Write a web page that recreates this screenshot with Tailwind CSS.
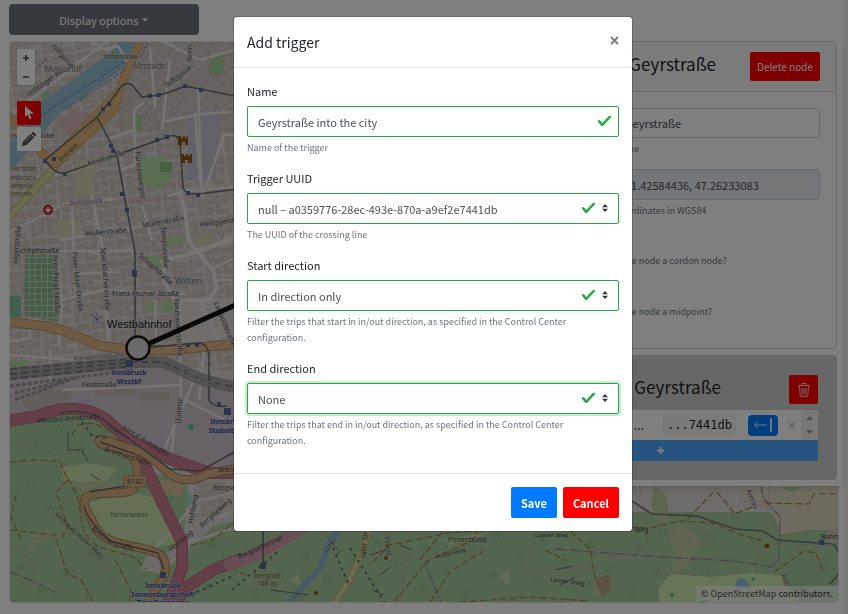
<!DOCTYPE html>
<html lang="en">
<head>
    <meta charset="UTF-8">
    <meta name="viewport" content="width=device-width, initial-scale=1.0">
    <title>Add trigger</title>
    <script src="https://cdn.jsdelivr.net/npm/@tailwindcss/browser@4"></script>
</head>
<body class="bg-white font-['Noto_Sans_CJK_SC',sans-serif] text-[11px] leading-5 text-[#212529] overflow-hidden">

    <!-- page -->
    <div class="relative min-h-screen px-[9px] pt-1 border-r-5 border-[#f4f4f4]">
        <button class="block w-[190px] h-[31px] rounded-sm bg-[#6c757d] text-white mb-[6px]">Display options <span class="inline-block align-middle mb-1 border-x-4 border-x-transparent border-t-4 border-t-white scale-75"></span></button>

        <div class="relative border border-[#dee2e6] rounded-sm overflow-hidden h-[562px] -mr-[5px]">
            <svg class="block w-full h-full" viewBox="10 42 828 560" preserveAspectRatio="xMinYMin slice" font-family="Noto Sans" font-size="7" fill="none">
                <defs>
                    <pattern id="houses" width="34" height="30" patternUnits="userSpaceOnUse" patternTransform="rotate(-7)">
                        <g fill="#d0c6bf" stroke="#c3b5ab" stroke-width=".6">
                            <path d="M2 2h8v6h-8zM11 2h5v8h-5zM18 3h10v5h-10zM29 2h4v9h-4zM2 11h5v12h-5zM9 13h8v5h-8zM19 11h4v12h-4zM25 13h7v6h-7zM9 21h7v7h-7zM2 25h5v4h-5zM19 25h12v4h-12z"/>
                        </g>
                    </pattern>
                    <pattern id="oldtown" width="27" height="25" patternUnits="userSpaceOnUse" patternTransform="rotate(-38)">
                        <path d="M1 1h7v10h-7zM9 2h9v6h-9zM20 1h6v11h-6zM9 10h9v5h-9zM2 14h5v9h-5zM10 17h11v6h-11zM22 14h4v9h-4z" fill="#cdc3bc" stroke="#bfb1a8" stroke-width=".6"/>
                    </pattern>
                    <pattern id="trees" width="47" height="41" patternUnits="userSpaceOnUse" patternTransform="rotate(6)">
                        <g stroke="#8fb583" stroke-width=".9">
                            <circle cx="8" cy="8" r="2"/><path d="M8 10v4"/><circle cx="12.500" cy="7" r="1.500"/><path d="M12.500 9v4"/>
                            <circle cx="31" cy="28" r="2"/><path d="M31 30v4"/><circle cx="35" cy="27" r="1.500"/><path d="M35 29v4"/>
                        </g>
                    </pattern>
                    <pattern id="orchard" width="6" height="6" patternUnits="userSpaceOnUse">
                        <path d="M0 0h5v5h-5z" fill="#8fb795"/>
                    </pattern>
                </defs>

                <!-- land use -->
                <path d="M0 30h840v580H0z" fill="#dcd8d6"/>
                <path d="M0 30h240v340H0z" fill="url(#houses)"/>
                <path d="M135 42h105v80l-60 5-45-20z" fill="#d5cfd3"/>
                <path d="M130 42h105v90h-120z" fill="url(#oldtown)"/>
                <path d="M190 110h30l-5 70h-30z" fill="#c6c3d0"/>
                <path d="M10 365l125-6 40 6 60 30v80l-60-15-70-45-95 8z" fill="#cfc5cd"/>
                <path d="M15 395l28-6 30 2-4 14-40 6zM95 385h40v9h-40zM140 392h30v9h-30z" fill="#c9bdb5"/>
                <path d="M25 255h32v67l-33-7z" fill="#bcdab0"/>
                <path d="M25 255h32v67l-33-7z" fill="url(#orchard)"/>
                <path d="M10 296h11v21H10z" fill="#7fbf9f"/>
                <path d="M140 158l25-2 7 22-12 12-22-8z" fill="#b5d9a4"/>
                <path d="M160 162h12v10h-12z" fill="#88c280"/>
                <path d="M210 58l15-3-2 19h-14zM132 116l10-2v16h-9zM72 87l8-4 8 15-7 5zM40 95l7-5 8 12-8 5z" fill="#a6cf9c"/>
                <path d="M75 160h20v35h-20zM55 222l25-2v18l-22 2zM195 235l15-3v12l-14 3z" fill="#d6d3b4"/>
                <path d="M165 240l20-4v7l-18 3zM145 302h9v10h-9zM162 302l11-3v14h-11zM147 257l13-2 3 14-12-5zM10 360h18l-3 8-15 3z" fill="#b2d4a0"/>
                <path d="M55 122l20-13 18 7-23 20z" fill="#d5b9b4"/>
                <path d="M180 298h60v45h-60z" fill="#e8e2e0" fill-opacity=".6"/>

                <!-- forest and meadows -->
                <path d="M10 424l55-12 34 3 35 30 14 25 35 12 12 10-12 50 10-10 45-20h600v100H10z" fill="#a9cb9f"/>
                <path d="M10 424l55-12 34 3 35 30 14 25 35 12 12 10-12 50 10-10 45-20h600v100H10z" fill="url(#trees)"/>
                <path d="M62 468l25-5 30 5-8 12-20 3-25-3zM85 503l50-10 22 5 20 45-30 7-38-10z" fill="#c9e0aa"/>
                <path d="M64 482l65-1 6 12-45 3zM30 550l18-12-8-6 6-4-14 8-10 20z" fill="#b9cb9f"/>
                <path d="M158 482l25-7v22l-20-4z" fill="#d8c29a"/>
                <path d="M187 485l18-5 28-3v45l-20 4-32 30-20 18-20-4 5-13 20-2 18-18z" fill="#dad6d2"/>
                <path d="M195 482h30v35h-30z" fill="url(#houses)"/>
                <path d="M733 482h107v48l-30 0-30 4-5-18-35-24z" fill="#ddd5c0"/>
                <path d="M780 487h22l-10 6z" fill="#a9cf9f"/>
                <path d="M659 602v-15l12-13 40 3 40-4 32 3 15 26z" fill="#cdebb0"/>
                <path d="M735 582l7-5 7 6v5h-13z" fill="#8fc1de"/>
                <path d="M668 532l15-7 18 14-15 30-14 6 3-20zM593 580l16-6 3 15-8 8-10-2zM655 486l12 10 2 26-12-2-6-15z" fill="#bfcba0"/>
                <path d="M594 579l16-5 1 16-9 7z" fill="#b8a685"/>
                <path d="M500 576l10-8-2 18zM440 540l50-8-14 8-25 4zM290 580l8-6 4 12z" fill="#c5d9ad"/>
                <path d="M828 530l12-2v10l-8 8-7-5z" fill="#cfc8c0"/>
                <g fill="#5fc49d"><circle cx="753" cy="579" r="2"/><circle cx="672" cy="595" r="2"/><circle cx="191" cy="427" r="3"/></g>
                <path d="M186 493l8-2-2 15-7 3z" fill="#a5d6c2"/>

                <!-- water -->
                <path d="M137 36L118 60 95 76 50 108 15 152 0 165" stroke="#92bfcb" stroke-width="20"/>
                <path d="M340 530l-12 14-8 25-15 15-18 20" stroke="#8fb3c8" stroke-width="6"/>

                <!-- side streets -->
                <g stroke="#ece9e7" stroke-width="2.500" stroke-linejoin="round">
                    <path d="M10 115l60-45 35-28M92 42l14 8 12-4 14 24M10 215l40-40M54 251h80M59 240l62-9 62-14M72 206l4 92M92 195l12 60 4 85M58 251l4 55-3 40M75 274l45-2M60 300l45-10 82 4M121 170l14-5-1-55 10-8M110 138l24-8M160 262l30-8 45-18M167 196l20-5 48-4"/>
                    <path d="M180 192l5 20 4 30 24 28 4 18-8 12h-35l-10-20v-20l30-7 22-8 25-8" stroke-width="4"/>
                    <path d="M198 88l4 110 22-63h10M155 300l1 40M180 298l1 100 48 24M142 205l10 35M214 268l20-10M214 280h20M200 300l22 48M10 355l80 6 40-2M62 390l120-5M175 420l-4 40M10 232l55-28 50-5M161 122l40-8 30-2M195 112l5 70M150 47l5 60M170 60l-8 70M160 40l40 20 40-12M30 318v20l-20 3M50 350v30M195 378l-30 70M205 340l-6 60"/>
                    <path d="M233 492l-38 10-22 28-18 18M190 482l5 25M200 525l32-14M233 528l-45 15" stroke="#e6e2de"/>
                </g>

                <!-- footpaths -->
                <g stroke="#d3a2a2" stroke-width="1" stroke-dasharray="2 2">
                    <path d="M10 440l28 8 20 8 14-10 12-20M58 455l8 22-5 14 16 20M10 545l14 8 10 18 2 25M33 540l30-8 14 12M85 560l15-12 20-8 20 12 15-10M95 565l60 12 10 10M118 575l-5 25M60 205l180-10M22 215l30 5M25 255h35l-1 65-34-5zM208 58l18 4-2 14-16-2zM110 190l70-6M250 486l5 50-20 20M250 590l20-30 5-32M270 560l5 35M390 530l15 35-5 37M410 532l-20 30M385 545l25 10-12 40M430 560l-30-5M640 486l8 55-8 20-30-6 5-30M655 569l-15-20-45 15-30 10 15 22M700 525l22 35 8 15M690 540l5 35-40-3M770 486l-5 38-10 50M740 500l30 8 4 20M500 602l25-30 50-5M540 540l-20 30M490 602l25-40M620 486v60M540 580l45-12M808 530l-30 8-5-15"/>
                </g>
                <g stroke="#a67d3f" stroke-width="1.200" stroke-dasharray="7 3">
                    <path d="M10 462l30-2 20 2 8 18-12 12 12 35-6 10M10 530l45 5 12 38 15 8 10 20M16 495l-5 22 10 22M72 435l6-10 16-2 14 8M68 478l10 20 6 35 14 14 36 10 12 12M115 560l16 30-2 12M190 545l20-3 25-20M245 575l-15-8 10-14M394 602l15-18 18-23 45-20 6-10-30 2-58 12-20 20M430 602l20-30 28-18 6-3M630 527l20 1 30-7 32 2 32 13 20 5M420 560l40-50M688 519l28-30M765 503l44 1 5-10h26M717 492l18 22 20-8M774 572l30-21 12 2 8 20M545 550l20 10M570 531l20 18 5 30M700 602l8-2"/>
                    <path d="M460 602l30-2 40-3 60 4" />
                </g>
                <path d="M430 560l-5 5 16 37M555 549l80 6 45 3 55 3 36 6 8-8 1-42-16-18-3-12M10 572l20 8 25 12" stroke="#96869b" stroke-width="1.500" stroke-dasharray="9 2 2 2"/>
                <path d="M632 501l20 13 45 2 38 13 28 2 14 9 42 3 14 1c9 6 12 30-4 40" stroke="#6f7470" stroke-width="1.500"/>

                <!-- main roads -->
                <g stroke-linejoin="round" stroke-linecap="round">
                    <path d="M54 168L8 218" stroke="#b4b27c" stroke-width="8"/><path d="M54 168L8 218" stroke="#d6d4a0" stroke-width="6"/>
                    <path d="M142 38l-18 40-10 32-58 54-14-11-34-38M118 92l-22 23-40 42" stroke="#b08f5c" stroke-width="8"/>
                    <path d="M142 38l-18 40-10 32-58 54-14-11-34-38M118 92l-22 23-40 42" stroke="#deb47c" stroke-width="7"/>
                    <path d="M8 322l36 4 18 4 38 16 32 4h40l63-6" stroke="#b8935f" stroke-width="10"/><path d="M8 322l36 4 18 4 38 16 32 4h40l63-6" stroke="#deb486" stroke-width="8"/>
                    <path d="M10 374l123-12h30l40 18 35 8" stroke="#a5a1a3" stroke-width="12"/>
                    <path d="M10 374l123-12h30l40 18 35 8M10 379l123-13M10 369l123-10" stroke="#7b7b7f" stroke-width="2" stroke-dasharray="7 4" stroke-linecap="butt"/>
                    <path d="M10 386l123-16M15 393l50-12M15 400l60-22" stroke="#98949a" stroke-width="3" stroke-dasharray="4 2" stroke-linecap="butt"/>
                    <path d="M8 421l30-5c30-12 50-8 66 2l26 23 45 20 35 12h25M138 450l24 52 20 40v26l-14 36M238 560l-25 10-26 17-14 18" stroke="#a8586b" stroke-width="12"/>
                    <path d="M8 421l30-5c30-12 50-8 66 2l26 23 45 20 35 12h25M138 450l24 52 20 40v26l-14 36M238 560l-25 10-26 17-14 18" stroke="#c87e8e" stroke-width="11"/>
                    <path d="M230 564l18-6 35-18 28-18" stroke="#cf9ca8" stroke-width="12"/>
                    <path d="M238 468l-30 6-12 5c-25 5-30-12-52-26l-36-12c-14-5-10 4 0 5 22 3 30 14 29 28-1 24-9 17-44 20-15 4-8 14-2 24 9 22 16 22 40 28 34 6 36 12 34 28l-18 30" stroke="#a58255" stroke-width="9"/>
                    <path d="M238 468l-30 6-12 5c-25 5-30-12-52-26l-36-12c-14-5-10 4 0 5 22 3 30 14 29 28-1 24-9 17-44 20-15 4-8 14-2 24 9 22 16 22 40 28 34 6 36 12 34 28l-18 30" stroke="#d8b083" stroke-width="7"/>
                    <path d="M372 522l-12 35-10 22-16 25" stroke="#b5b377" stroke-width="7"/><path d="M372 522l-12 35-10 22-16 25" stroke="#d6d49f" stroke-width="5"/>
                </g>

                <!-- tram and railway -->
                <g stroke="#66666c" stroke-width="1.500" stroke-linejoin="round">
                    <path d="M240 97l-40-8-15-3-12 5-13 4-18 2-10-12q-9-5-15 8l-20 24-52 43M97 117l20 38 10 55 8 42v95M45 160q10 15 20 13l52-18 50-18q10-5 13 6l3 44q1 8 15 7l40-5M140 348l60-5q8 2 9 12v45q4 8 18 6M100 442l35 12M90 492l35-6M84 505q2 14 26 36l48 12 6 16M60 413q30-6 50 12l60 44 30 2 40-22M263 520v45M110 427l20 12"/>
                </g>
                <g fill="#5a679e">
                    <path d="M148 94h4v4h-4zM157 93h4v4h-4zM183 84h4v4h-4zM199 88h4v4h-4zM101 107h4v4h-4zM107 102h4v4h-4zM109 144h4v4h-4zM111 149h4v4h-4zM52 157h4v4h-4zM43 159h4v4h-4zM63 172h4v4h-4zM120 192h4v4h-4zM125 208h4v4h-4zM132 270h5v7h-5zM155 138h4v4h-4zM165 135h4v4h-4zM186 191h4v4h-4zM196 193h4v4h-4zM186 343h4v4h-4zM195 343h4v4h-4zM126 360h7v7h-7zM217 402h4v4h-4zM224 408h7v7h-7zM160 572h6v6h-6zM260 563h6v6h-6zM819 540h5v5h-5z"/>
                </g>
                <g stroke="#6b6f6c" stroke-width="2" stroke-dasharray="3 4">
                    <path d="M232 590l48-40M333 548l15 35M350 548l35 55M190 595l45-20M82 422l10 14 15 2"/>
                </g>
                <g stroke="#7873c0" stroke-width="1.200" stroke-dasharray="2 2">
                    <path d="M22 83l25-25M34 120l90-58M125 70l-60 40M148 43l-8 15M91 315l12 8M93 322l9-6M97 313v12"/>
                </g>
                <g stroke="#6b6d6a" stroke-width="1">
                    <path d="M330 540l8 10M328 546l8-6M326 552l6-5M335 556l6-5M370 555l15-5M380 575l10-8M400 545l12 5M372 590l12 5M270 590l40 5M555 570l18-4M560 585l15-8M68 432v18h12M88 462l-6-12M100 480l-10-6" />
                </g>
                <g fill="#8d5911"><path d="M178 136h3v2h2v-2h2v2h2v-2h1v9h-3v-3h-3v3h-4zM181 154h3v2h2v-2h2v2h2v-2h2v9h-4v-3h-3v3h-4z"/><circle cx="386" cy="558" r="2"/><circle cx="316" cy="593" r="2"/><circle cx="767" cy="546" r="2.500"/></g>
                <circle cx="48" cy="210" r="5" fill="#c62334"/><path d="M48 207v6M45 210h6" stroke="#fff" stroke-width="1.500"/>

                <!-- labels -->
                <g fill="#484848" stroke="#d8d4d1" stroke-width="1" paint-order="stroke">
                    <text x="44" y="72" font-size="9" fill="#777">Mariahilf</text>
                    <text x="132" y="69" font-size="9" fill="#777">Altstadt</text>
                    <text x="175" y="284" font-size="9" fill="#777">Wilten</text>
                    <text x="104" y="59">Innbrücke</text>
                    <text transform="translate(29 97) rotate(-36)">Höttinger Au</text>
                    <text transform="translate(52 47) rotate(48)">hilfgasse</text>
                    <text transform="translate(167 88) rotate(-38)">Stiftgasse</text>
                    <text transform="translate(192 62) rotate(-90)">Renn</text>
                    <text x="11" y="138">rsitätsbrücke</text>
                    <text transform="translate(61 162) rotate(-43)" stroke="#deb47c">Innrain</text>
                    <text transform="translate(88 166) rotate(-17)">Anichstraße</text>
                    <text transform="translate(135 152) rotate(83)">Fürstenwegstr</text>
                    <text transform="translate(85 236) rotate(-5)">Müllerstraße</text>
                    <text transform="translate(143 228) rotate(-11)">Müllerstraße</text>
                    <text transform="translate(200 227) rotate(-8)">Heiliggeiststr</text>
                    <text x="16" y="253">Schöpfstraße</text>
                    <text transform="translate(138 256) rotate(42)">Schöpfstraße</text>
                    <text transform="translate(53 256) rotate(88)">Fritz-Pregl-Straße</text>
                    <text transform="translate(72 252) rotate(84)">Peter-Mayr-Straße</text>
                    <text transform="translate(101 248) rotate(86)">Speckbacherstraße</text>
                    <text transform="translate(161 227) rotate(86)">Templstraße</text>
                    <text x="112" y="296">Franz-Fischer-Straße</text>
                    <text transform="translate(174 299) rotate(86)">Neuhauserstraße</text>
                    <text transform="translate(214 303) rotate(68)">Leopoldstraße</text>
                    <text transform="translate(17 264) rotate(-84)">ingerstraße</text>
                    <text transform="translate(74 361) rotate(-4)" fill="#777">Karwendelbahn</text>
                    <text x="82" y="387">Feldstraße</text>
                    <text transform="translate(183 374) rotate(24)">Duilestraße</text>
                    <text transform="translate(180 424) rotate(-84)">Duilestr.</text>
                    <g stroke="none">
                        <text transform="translate(37 423) rotate(-4)">Westast-Innsbruck</text>
                        <text transform="translate(122 429) rotate(32)">Inntal Autobahn</text>
                        <text transform="translate(104 451) rotate(18)">Brennerstraße</text>
                        <text transform="translate(91 530) rotate(36)">Brenner</text><text transform="translate(113 546) rotate(12)">straße</text>
                        <text x="218" y="472">Bren</text>
                        <text x="213" y="490">Bergsel</text>
                        <text transform="translate(193 524) rotate(-82)">Hohlweg</text>
                        <text transform="translate(202 528) rotate(-42)">Bergiselweg</text>
                        <text transform="translate(171 552) rotate(-40)">Hohlweg</text>
                        <text transform="translate(54 515) rotate(43)" fill="#666">Andreas-Hofer-Weg</text>
                        <text x="110" y="517" font-style="italic" fill="#648555">Ferrariwiese</text>
                        <text transform="translate(239 559) rotate(-24)">Bergiseltunnel</text>
                        <text transform="translate(364 558) rotate(-80)">Igler Str</text>
                        <text transform="translate(384 537) rotate(82)" fill="#757">Prastl</text>
                        <text x="448" y="542">Poltenhütte</text>
                        <text transform="translate(437 559) rotate(-15)" font-size="6">Poltenweg</text>
                        <text x="535" y="537" font-size="6">Lanser Steg</text>
                        <text x="634" y="532">Weg</text>
                        <text transform="translate(550 581) rotate(8)" font-size="6">Lanser Steig</text>
                        <text transform="translate(746 490) rotate(68)" fill="#757">Amras</text>
                        <text transform="translate(781 575) rotate(72)" fill="#757">Aldr</text>
                        <text x="821" y="539">Bahn</text>
                        <g fill="#85644e" text-anchor="middle"><text x="267" y="578">Bergisel</text><text x="267" y="586">746 m</text></g>
                        <g fill="#727348" font-style="italic"><text x="11" y="171">iversität</text><text x="11" y="180">nsbruck</text><text x="11" y="188">ampus</text><text x="11" y="196">nnrain</text></g>
                    </g>
                    <text transform="translate(70 206) rotate(-6)" fill="#8d6c9a">Innsbruck</text>
                    <g fill="#3e4e99" font-weight="bold" text-anchor="middle" stroke="#c9c9cd">
                        <text x="129" y="375">Innsbruck</text><text x="129" y="384">Westbf</text>
                        <text x="228" y="424">Innsbruck</text><text x="228" y="433">Stubaitalbf</text>
                        <text x="163" y="588">Innsbruck</text><text x="163" y="597">Sonnenburgerhof/</text><text x="163" y="605">Tirol Panorama</text>
                    </g>
                </g>
                <path d="M124 476h22v11h-22z" fill="#d5b48d" stroke="#a98a66"/><text x="127" y="484" fill="#5b4a35">B182</text>

                <!-- network link and node -->
                <path d="M139 348L240 303" stroke="#111" stroke-width="5"/>
                <circle cx="138" cy="348" r="11.500" fill="#d7d5d3" stroke="#161616" stroke-width="2.500"/>
                <text x="107" y="328" font-family="Liberation Sans" font-size="11" fill="#111" stroke="#ddd" stroke-width="1" paint-order="stroke">Westbahnhof</text>
            </svg>

            <div class="absolute left-[7px] top-[7px] flex flex-col">
                <div class="flex flex-col w-[18px] rounded-xs bg-white text-[#444] shadow-sm">
                    <button aria-label="Zoom in" class="h-[18px] flex items-center justify-center"><svg class="size-2" viewBox="0 0 8 8" stroke="currentColor" stroke-width="1.500"><path d="M4 1v6M1 4h6"/></svg></button>
                    <button aria-label="Zoom out" class="h-[18px] flex items-center justify-center"><svg class="size-2" viewBox="0 0 8 8" stroke="currentColor" stroke-width="1.500"><path d="M1 5h6"/></svg></button>
                </div>
                <button aria-label="Select" class="mt-4 size-6 rounded-xs bg-[#f00] flex items-center justify-center"><svg class="w-[9px] h-[14px]" viewBox="0 0 9 14" fill="#fff"><path d="M0 0v11l2.600-2.500 1.900 4.700 2-.9-2-4.500H9z"/></svg></button>
                <button aria-label="Draw" class="mt-[2px] size-6 rounded-xs bg-white flex items-center justify-center"><svg class="size-[14px]" viewBox="0 0 14 14" fill="#555"><path d="M0 14l1-4.500L8.500 2 12 5.500 4.500 13zM9.300 1.200l1-1q.7-.5 1.400 0l2.100 2.100q.6.7 0 1.400l-1 1z"/><path d="M3 10l6-6" stroke="#ddd" stroke-width=".8"/></svg></button>
            </div>
            <div class="absolute right-0 bottom-0 px-[5px] bg-white/60 text-[9px] leading-4 text-[#333]">© <a href="#" class="text-[#555]">OpenStreetMap</a> contributors.</div>
        </div>

        <!-- side panel -->
        <aside class="absolute right-0 top-[41px] w-[360px] bg-white pr-[6px] pb-[6px] shadow-md">
            <section class="border border-[#d5d5d5] rounded-sm">
                <header class="flex items-center h-[50px] pr-4 bg-[#f7f7f7] border-b border-[#d5d5d5]">
                    <h2 class="grow text-right text-[17px] leading-6 pr-[34px] pb-[6px]">Geyrstraße</h2>
                    <button class="h-[29px] px-[7px] rounded-xs bg-[#f00] text-[10px] text-white">Delete node</button>
                </header>
                <div class="pl-[130px] pr-4 pt-4 h-[256px] text-[#495057]">
                    <input aria-label="Node name" value="Geyrstraße" class="block w-full h-[30px] px-[10px] border border-[#ced4da] rounded-sm">
                    <p class="mt-[3px] text-[9px] leading-4 text-[#6c757d]">Name</p>
                    <input aria-label="Coordinates" readonly value="11.42584436, 47.26233083" class="block w-full h-[31px] mt-3 px-[10px] border border-[#ced4da] bg-[#e9ecef] rounded-sm">
                    <p class="mt-[3px] text-[9px] leading-4 text-[#6c757d]">Coordinates in WGS84</p>
                    <p class="mt-[34px] text-[9px] leading-4 text-[#6c757d]">Is the node a cordon node?</p>
                    <p class="mt-[35px] text-[9px] leading-4 text-[#6c757d]">Is the node a midpoint?</p>
                </div>
            </section>
            <section class="mt-[6px] rounded-sm bg-[#cfcfcf] pt-5 px-[19px] pb-[19px]">
                <div class="flex items-center h-[29px] mb-[6px]">
                    <h2 class="grow text-right text-[17px] leading-6 pr-[68px] pb-[6px]">Geyrstraße</h2>
                    <button aria-label="Delete" class="size-[29px] rounded-xs bg-[#f00] flex items-center justify-center"><svg class="w-3 h-[14px]" viewBox="0 0 12 14" fill="none" stroke="#fff" stroke-opacity=".8"><path d="M0 2.500h12M4 2V.5h4V2M1.500 3l.8 10.300h7.400L10.500 3M4 5l.3 6.500M6 5v6.500M8 5l-.3 6.500"/></svg></button>
                </div>
                <div class="flex items-center h-[30px] bg-white">
                    <span class="grow text-right pr-[19px] text-[12px]">g ...</span>
                    <code class="rounded-sm bg-[#f4f4f4] px-1 font-['DejaVu_Sans_Mono',monospace] text-[12px]">...7441db</code>
                    <button aria-label="In direction" class="ml-3 w-[30px] h-[21px] rounded-sm bg-[#007bff] flex items-center justify-center"><svg class="w-5 h-4" viewBox="0 0 20 16" fill="none" stroke="#fff" stroke-opacity=".85"><path d="M14 8H1.500M5 4.500L1.500 8 5 11.500"/><path d="M18 1v14" stroke-width="2"/></svg></button>
                    <button aria-label="Remove" class="w-[23px] pl-1 text-[#aaa]">×</button>
                    <span class="w-[17px] h-full bg-[#f0f0f0] flex flex-col items-center justify-between py-[6px]">
                        <svg class="w-[7px] h-1" viewBox="0 0 7 4" fill="#999"><path d="M0 4L3.500 0 7 4z"/></svg>
                        <svg class="w-[7px] h-1" viewBox="0 0 7 4" fill="#999"><path d="M0 0l3.500 4L7 0z"/></svg>
                    </span>
                </div>
                <button aria-label="Add" class="w-full h-[21px] bg-[#4fa9ff] flex items-center justify-center"><svg class="size-[7px]" viewBox="0 0 8 8" stroke="#fff" stroke-width="2"><path d="M4 0v8M0 4h8"/></svg></button>
            </section>
        </aside>
    </div>

    <!-- modal -->
    <div class="fixed inset-0 bg-black/50 flex items-start justify-center pt-4 pl-[18px]">
        <form role="dialog" aria-labelledby="title" class="w-full max-w-[400px] bg-white border border-black/20 bg-clip-padding rounded-sm">
            <div class="flex justify-between items-start h-[51px] px-[13px] pt-[13px] border-b border-[#dee2e6]">
                <h1 id="title" class="text-[14px] leading-6">Add trigger</h1>
                <button type="button" aria-label="Close" class="mt-[6px] size-[9px] text-[#7f7f7f]"><svg viewBox="0 0 9 9" stroke="currentColor" stroke-width="2"><path d="M1 1l7 7M8 1L1 8"/></svg></button>
            </div>
            <div class="px-[13px] pt-[13px] pb-6 flex flex-col gap-3">
                <div>
                    <label for="name" class="block mb-[5px]">Name</label>
                    <div class="relative">
                        <input id="name" value="Geyrstraße into the city" class="block w-full h-[31px] px-[10px] border border-[#28a745] rounded-xs text-[#495057]">
                        <svg class="absolute right-[7px] top-2 w-[15px] h-[14px]" viewBox="0 0 8 8" preserveAspectRatio="none" fill="#28a745"><path d="M2.300 6.730L.6 4.530c-.4-1.040.46-1.400 1.100-.8l1.100 1.400 3.400-3.800c.6-.63 1.600-.27 1.200.7l-4 4.600c-.43.5-.8.4-1.100.1z"/></svg>
                    </div>
                    <p class="mt-[3px] text-[9px] leading-4 text-[#6c757d]">Name of the trigger</p>
                </div>
                <div>
                    <label for="uuid" class="block mb-[5px]">Trigger UUID</label>
                    <div class="relative">
                        <select id="uuid" class="block appearance-none w-full h-[31px] px-[10px] border border-[#28a745] rounded-xs text-[#495057]"><option>null – a0359776-28ec-493e-870a-a9ef2e7441db</option></select>
                        <svg class="absolute right-[23px] top-2 w-[15px] h-[14px]" viewBox="0 0 8 8" preserveAspectRatio="none" fill="#28a745"><path d="M2.300 6.730L.6 4.530c-.4-1.040.46-1.400 1.100-.8l1.100 1.400 3.400-3.800c.6-.63 1.600-.27 1.200.7l-4 4.600c-.43.5-.8.4-1.100.1z"/></svg>
                        <svg class="absolute right-[11px] top-[11px] w-[6px] h-2" viewBox="0 0 4 5" preserveAspectRatio="none" fill="#343a40"><path d="M2 0L0 2h4zm0 5L0 3h4z"/></svg>
                    </div>
                    <p class="mt-[3px] text-[9px] leading-4 text-[#6c757d]">The UUID of the crossing line</p>
                </div>
                <div>
                    <label for="start" class="block mb-[5px]">Start direction</label>
                    <div class="relative">
                        <select id="start" class="block appearance-none w-full h-[31px] px-[10px] border border-[#28a745] rounded-xs text-[#495057]"><option>In direction only</option></select>
                        <svg class="absolute right-[23px] top-2 w-[15px] h-[14px]" viewBox="0 0 8 8" preserveAspectRatio="none" fill="#28a745"><path d="M2.300 6.730L.6 4.530c-.4-1.040.46-1.400 1.100-.8l1.100 1.400 3.400-3.800c.6-.63 1.600-.27 1.200.7l-4 4.600c-.43.5-.8.4-1.100.1z"/></svg>
                        <svg class="absolute right-[11px] top-[11px] w-[6px] h-2" viewBox="0 0 4 5" preserveAspectRatio="none" fill="#343a40"><path d="M2 0L0 2h4zm0 5L0 3h4z"/></svg>
                    </div>
                    <p class="mt-[3px] pr-10 text-[9px] leading-4 text-[#6c757d]">Filter the trips that start in in/out direction, as specified in the Control Center configuration.</p>
                </div>
                <div>
                    <label for="end" class="block mb-[5px]">End direction</label>
                    <div class="relative">
                        <select id="end" class="block appearance-none w-full h-[31px] px-[10px] border border-[#28a745] rounded-xs text-[#495057] ring-2 ring-[#28a745]/25"><option>None</option></select>
                        <svg class="absolute right-[23px] top-2 w-[15px] h-[14px]" viewBox="0 0 8 8" preserveAspectRatio="none" fill="#28a745"><path d="M2.300 6.730L.6 4.530c-.4-1.040.46-1.400 1.100-.8l1.100 1.400 3.400-3.800c.6-.63 1.600-.27 1.200.7l-4 4.600c-.43.5-.8.4-1.100.1z"/></svg>
                        <svg class="absolute right-[11px] top-[11px] w-[6px] h-2" viewBox="0 0 4 5" preserveAspectRatio="none" fill="#343a40"><path d="M2 0L0 2h4zm0 5L0 3h4z"/></svg>
                    </div>
                    <p class="mt-[3px] pr-10 text-[9px] leading-4 text-[#6c757d]">Filter the trips that end in in/out direction, as specified in the Control Center configuration.</p>
                </div>
            </div>
            <div class="flex justify-end gap-[6px] p-[13px] border-t border-[#dee2e6] font-bold text-white">
                <button type="button" class="h-[31px] px-[10px] rounded-xs bg-[#007bff]">Save</button>
                <button type="button" class="h-[31px] px-[10px] rounded-xs bg-[#f00]">Cancel</button>
            </div>
        </form>
    </div>
</body>
</html>
